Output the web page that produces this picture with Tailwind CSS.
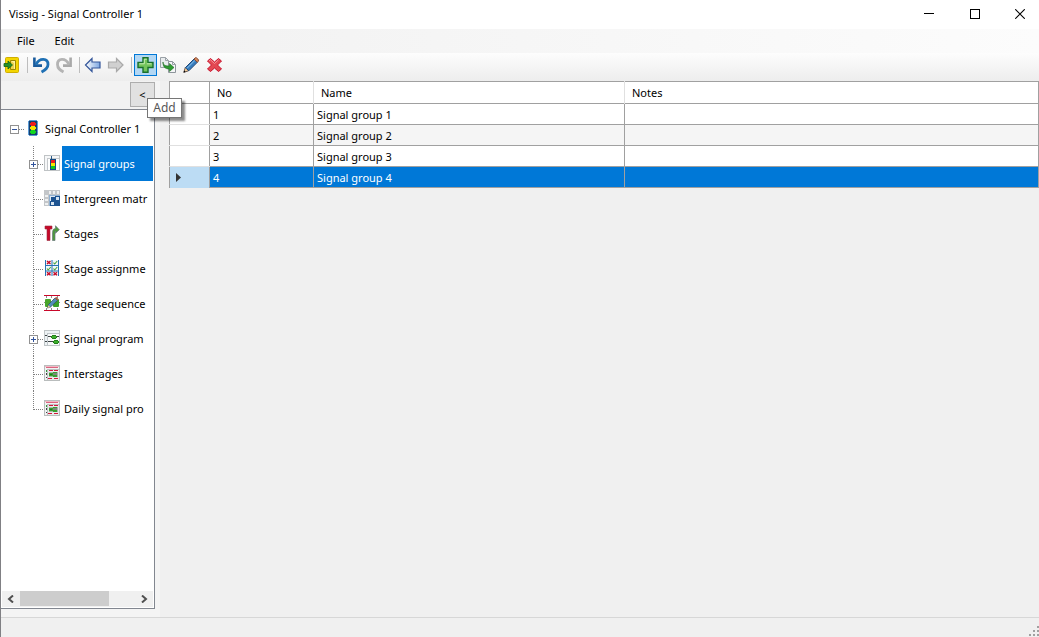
<!DOCTYPE html>
<html lang="en">
<head>
<meta charset="utf-8">
<title>Vissig - Signal Controller 1</title>
<script src="https://cdn.jsdelivr.net/npm/@tailwindcss/browser@4"></script>
</head>
<body class="flex h-screen flex-col overflow-hidden border-l border-[#808084] bg-[#f0f0f0] font-['Noto_Sans','Open_Sans',sans-serif] text-[11px] leading-4 text-black">

<svg class="hidden" aria-hidden="true">
  <symbol id="lamp" viewBox="0 0 10 16">
    <g shape-rendering="crispEdges">
      <path d="M1 0h8v1h1v14H9v1H1v-1H0V1h1z" fill="#5b9bd5"/><path d="M1 1h8v14H1z" fill="#163f6e"/>
      <path d="M3 2h4v1h1v2H7v1H3V5H2V3h1z" fill="#f01c1c"/><path d="M3 6h4v1h1v2H7v1H3V9H2V7h1z" fill="#f5e600"/><path d="M3 10h4v1h1v2H7v1H3v-1H2v-2h1z" fill="#12d620"/>
    </g>
  </symbol>
  <symbol id="report" viewBox="0 0 16 16">
    <g shape-rendering="crispEdges">
      <path d="M0 0h16v16H0z" fill="#b9bdbd"/><path d="M1 1h14v14H1z" fill="#f1f3f3"/>
      <path d="M1 1h14v1H1z" fill="#f1b8c3"/><path d="M2 2h12v1H2z" fill="#dc6480"/>
      <path d="M3 4h12v11H3z" fill="#bdc1c1"/><path d="M4 5h11v10H4z" fill="#e8eaea"/>
      <path d="M2 5h1v2H2z" fill="#2d9c3a"/><path d="M2 8h1v2H2zM2 12h1v1H2z" fill="#444"/>
      <path d="M5 5h4v1H5zM10 5h4v1h-4zM4 13h4v1H4zM10 13h4v1h-4z" fill="#d3183b"/>
      <path d="M5 7h9v5H5z" fill="#a9b5a9"/>
      <path d="M9 7h4v1H9zM5 8h4v3H5zM9 10h4v2H9z" fill="#37a02f"/>
      <path d="M9 8h4v2H9z" fill="#7d867d"/><path d="M6 9h2v1H6z" fill="#217a1d"/>
    </g>
  </symbol>
</svg>

<header class="flex h-[29px] shrink-0 items-center bg-white pb-px pl-2">
  <h1>Vissig - Signal Controller 1</h1>
  <div class="ml-auto flex h-full">
    <button class="flex w-[46px] items-center justify-center" aria-label="Minimize"><svg width="10" height="10" shape-rendering="crispEdges"><path d="M0 4h10v1H0z"/></svg></button>
    <button class="flex w-[45px] items-center justify-center" aria-label="Maximize"><svg width="10" height="10" fill="none" stroke="#000" shape-rendering="crispEdges"><path d="M.5 .5h9v9h-9z"/></svg></button>
    <button class="flex w-[42px] items-center justify-center pl-1" aria-label="Close"><svg width="10" height="10" fill="none" stroke="#000" stroke-width="1.1"><path d="M.2 .2l9.600 9.600M9.800 .2l-9.600 9.600"/></svg></button>
  </div>
</header>

<nav class="flex h-6 shrink-0 items-center bg-linear-to-r from-[#f0f0f0] to-[#fcfcfc] pl-4" aria-label="Menu">
  <button class="mr-5">File</button>
  <button>Edit</button>
</nav>

<div class="flex h-7 shrink-0 items-start bg-linear-to-b from-[#fdfdfd] to-[#ededed] pl-[2px]" role="toolbar" aria-label="Tools">
  <button class="flex h-6 w-5 items-center" aria-label="Exit">
    <svg width="17" height="16" viewBox="0 0 17 16"><rect x="2.500" y=".5" width="13" height="15" rx="1" fill="#f3d500" stroke="#d0ae00"/><path d="M7.500 3.500h5v9h-5z" fill="#fff29b" stroke="#9b8600"/><path d="M8 4l3 2v6H8z" fill="#ead24c"/><path d="M1 6.500h4v-2.500l4.500 4-4.500 4V9.500H1z" fill="#23902b" stroke="#126316" stroke-width=".8"/></svg>
  </button>
  <span class="mx-1 mt-1 h-4 w-px bg-[#bdbdbd]"></span>
  <button class="flex h-6 w-[23px] items-center pl-px" aria-label="Undo">
    <svg width="17" height="18" viewBox="0 0 17 18" fill="none"><path d="M1.400 1.500v8.100H9" stroke="#1a5b9c" stroke-width="2.600"/><path d="M3 8.500C6.500 1.500 15 2 15 8.500c0 4-3 5.500-6.500 7.500" stroke="#1f70b4" stroke-width="2.800"/></svg>
  </button>
  <button class="flex h-6 w-6 items-center pl-px" aria-label="Redo">
    <svg width="17" height="18" viewBox="0 0 17 18" fill="none"><path d="M14.600 1.500v8.100H7" stroke="#a9a9a9" stroke-width="2.600"/><path d="M13 8.500C9.500 1.500 1.500 2 1.500 8.500c0 4 2.500 5.500 6 7.500" stroke="#b4b4b4" stroke-width="2.800"/></svg>
  </button>
  <span class="mr-1 mt-1 h-4 w-px bg-[#bdbdbd]"></span>
  <button class="flex h-6 w-[23px] items-center" aria-label="Back">
    <svg width="17" height="16" viewBox="0 0 17 16"><defs><linearGradient id="bl"><stop stop-color="#fff"/><stop offset="1" stop-color="#7ba5e0"/></linearGradient></defs><path d="M1.500 8l6.500-6.500V5h8v6H8v3.500z" fill="url(#bl)" stroke="#34569a" stroke-width="1.200"/></svg>
  </button>
  <button class="flex h-6 w-6 items-center" aria-label="Forward">
    <svg width="17" height="16" viewBox="0 0 17 16"><path d="M16 8L9.500 1.500V5H1.500v6h8v3.500z" fill="#d0d0d0" stroke="#a9a9a9" stroke-width="1.200"/></svg>
  </button>
  <span class="mr-[2px] mt-1 h-4 w-px bg-[#bdbdbd]"></span>
  <div class="relative">
    <button class="mt-px flex h-[22px] w-[23px] items-center justify-center border border-[#0078d7] bg-[#b3d7f3]" aria-label="Add" aria-describedby="tip">
      <svg width="17" height="16" viewBox="0 0 17 16"><path d="M6 .8h5v4.700h5v5h-5v4.700H6v-4.700H1v-5h5z" fill="#73c45c" stroke="#18702d" stroke-width="1.400"/><path d="M7.300 6.800V2.200h2.500M2.300 6.800h5M9.800 6.800h4.800" stroke="#c7efb5" fill="none"/></svg>
    </button>
    <div id="tip" role="tooltip" class="absolute left-[13px] top-[45px] z-10 flex h-5 w-[35px] items-center justify-center border border-[#767676] bg-white text-[12px] text-[#575757] shadow-[3px_3px_2px_rgba(0,0,0,0.45)]">Add</div>
  </div>
  <button class="flex h-6 w-[23px] items-center justify-center" aria-label="Duplicate">
    <svg width="17" height="16" viewBox="0 0 17 16"><path d="M.5 .5h5l3 3v7h-8z" fill="#e9ecee" stroke="#9aa1a7"/><path d="M8.500 4.500h4l3 3v8h-7z" fill="#f5f6f7" stroke="#8d959b"/><path d="M12.500 4.500v3h3M5.500 .5v3h3" fill="none" stroke="#9aa1a7"/><path d="M3 5c0 3 2 4 6.500 4V6.500L14 10.500l-4.500 4V12C5 12 3 10 3 5z" fill="#2e9b31" stroke="#17661c" stroke-width=".6"/></svg>
  </button>
  <button class="flex h-6 w-[23px] items-center justify-center" aria-label="Edit item">
    <svg width="17" height="16" viewBox="0 0 17 16"><path d="M.8 15.300l1.500-4.800 3.300 3.300z" fill="#f5cf9c" stroke="#44332d" stroke-width=".8"/><path d="M2.500 10.500L11 2l3.300 3.300-8.500 8.500z" fill="#367cbd" stroke="#234876"/><path d="M4 11.300l8-8" stroke="#91c6ec"/><path d="M11 2l1.200-1.200c1.200-.8 4 2 3.200 3.300l-1.100 1.200z" fill="#d8885b" stroke="#854b35"/><path d="M.6 15.500l.6-2 1.400 1.400z"/></svg>
  </button>
  <button class="flex h-6 w-[23px] items-center justify-center" aria-label="Delete">
    <svg width="17" height="16" viewBox="0 0 17 16"><path d="M1.500 4l3-2.500L8.500 5l4-3.500 3 2.500-4 4 4 4-3 2.500-4-3.500-4 3.500-3-2.500 4-4z" fill="#e34852" stroke="#c8102a"/><path d="M3 4l1.500-1.200 4 3.700 4-3.700" fill="none" stroke="#f5949a"/></svg>
  </button>
</div>

<div class="flex min-h-0 flex-1">
  <aside class="flex w-[159px] shrink-0 flex-col bg-[#f4f4f4] pb-2 pr-[5px]">
    <div class="flex h-7 shrink-0 items-start justify-end bg-[#f2f2f2] pt-px">
      <button class="h-[25px] w-[25px] border border-[#adadad] bg-[#e1e1e1]" aria-label="Collapse panel">&lt;</button>
    </div>
    <div class="flex min-h-0 flex-1 flex-col border border-l-0 border-[#828790] bg-white p-px">
      <ul class="min-h-0 flex-1 overflow-hidden whitespace-nowrap" role="tree" aria-label="Signal controller">
        <li role="treeitem" aria-expanded="true">
          <button class="flex h-[35px] items-center pl-2">
            <svg class="mr-[3px]" width="15" height="35" fill="none" shape-rendering="crispEdges"><path d="M.5 14.500h8v8h-8z" fill="#fff" stroke="#919191"/><path d="M2 18.500h5" stroke="#32549c"/><path d="M9 18.500h6" stroke="#808080" stroke-dasharray="1 1"/></svg>
            <svg class="mr-[7px]" width="10" height="17"><use href="#lamp" width="10" height="16"/></svg>
            <span>Signal Controller 1</span>
          </button>
          <ul role="group">
            <li role="treeitem" aria-selected="true"><button class="flex h-[35px] w-full items-center pl-[27px]">
              <svg class="shrink-0" width="15" height="35" fill="none" shape-rendering="crispEdges"><path d="M4.500 0v35M5 18.500h10" stroke="#808080" stroke-dasharray="1 1"/><path d="M.5 14.500h8v8h-8z" fill="#fff" stroke="#919191"/><path d="M2 18.500h5M4.500 16v5" stroke="#32549c"/></svg>
              <svg class="mr-[2px] shrink-0" width="16" height="17" shape-rendering="crispEdges"><path d="M0 0h16v16H0z" fill="#bfc3c5"/><path d="M1 1h14v14H1z" fill="#f6f7f8"/><path d="M3 3h12v12H3z" fill="#c5c9cc"/><path d="M4 4h11v11H4z" fill="#fff"/><path d="M7 1h1v3H7z" fill="#295a87"/><path d="M6 4h6v11H6z" fill="#174b82"/><path d="M7 5h4v3H7z" fill="#f01c1c"/><path d="M7 8h4v3H7z" fill="#f5e600"/><path d="M7 11h4v3H7z" fill="#12c620"/></svg>
              <span class="flex h-full flex-1 items-center bg-[#0078d7] pl-[2px] text-white">Signal groups</span>
            </button></li>
            <li role="treeitem"><button class="flex h-[35px] w-full items-center pl-[27px]">
              <svg class="shrink-0" width="15" height="35" shape-rendering="crispEdges"><path d="M4.500 0v35M5 18.500h10" stroke="#808080" stroke-dasharray="1 1"/></svg>
              <svg class="mr-1 shrink-0" width="16" height="17" shape-rendering="crispEdges"><path d="M0 0h16v5H5v11H0z" fill="#c3c6c9"/><path d="M5 1h2v3H5zM9 1h2v3H9zM13 1h2v3h-2zM1 5h3v2H1zM1 9h3v2H1zM1 13h3v2H1z" fill="#eef0f1"/><path d="M5 5h11v11H5z" fill="#dfe9f3"/><path d="M5 5h11v1H5zM5 6h1v10H5z" fill="#8fb0d2"/><path d="M11 6h5v5h-5zM6 11h5v5H6z" fill="#1d5391"/><path d="M7 12h3v3H7zM12 7h3v3h-3z" fill="#d3e2f0"/><path d="M7 7h4v4H7zM11 11h5v5h-5z" fill="#1d5391"/></svg>
              <span>Intergreen matr</span>
            </button></li>
            <li role="treeitem"><button class="flex h-[35px] w-full items-center pl-[27px]">
              <svg class="shrink-0" width="15" height="35" shape-rendering="crispEdges"><path d="M4.500 0v35M5 18.500h10" stroke="#808080" stroke-dasharray="1 1"/></svg>
              <svg class="mr-1 shrink-0" width="16" height="17"><path d="M1 1h7v3H6v11.500H3V4H1z" fill="#c70828" stroke="#9c3144" stroke-width=".6"/><path d="M8.500 15.500V7.500q0-4 3-4V.7l3.800 4-3.800 3.600V6q-.5 0-.5 2v7.500z" fill="#4c9a3b" stroke="#68757b" stroke-width=".7"/></svg>
              <span>Stages</span>
            </button></li>
            <li role="treeitem"><button class="flex h-[35px] w-full items-center pl-[27px]">
              <svg class="shrink-0" width="15" height="35" shape-rendering="crispEdges"><path d="M4.500 0v35M5 18.500h10" stroke="#808080" stroke-dasharray="1 1"/></svg>
              <svg class="mr-1 shrink-0" width="16" height="17" fill="none"><path d="M1 0h14v16H1z" fill="#f1f7fb"/><path d="M1.500 0v16M8 0v16M14.500 0v16M1 5.500h14M1 11h14" stroke="#2673b5"/><path d="M3 1l3.500 3M6.500 1L3 4M3 12.300l3.500 3M6.500 12.300l-3.500 3M9.500 12.300l3.500 3M13 12.300l-3.500 3" stroke="#c80928" stroke-width="1.500"/><path d="M9.500 2.700l1.200 1.300 2.500-3M3 8.500l1.200 1.500L6.800 7M9.500 8.500l1.200 1.500 2.500-3" stroke="#48a23c" stroke-width="1.100"/></svg>
              <span>Stage assignme</span>
            </button></li>
            <li role="treeitem"><button class="flex h-[35px] w-full items-center pl-[27px]">
              <svg class="shrink-0" width="15" height="35" shape-rendering="crispEdges"><path d="M4.500 0v35M5 18.500h10" stroke="#808080" stroke-dasharray="1 1"/></svg>
              <svg class="mr-1 shrink-0" width="16" height="17"><path d="M0 0h16v1H0zM0 15h16v1H0z" fill="#c9082a"/><path d="M2 1h1v2H2zM7 1h1v2H7zM13 1h1v2h-1zM2 13h1v2H2zM7 13h1v2H7zM13 13h1v2h-1zM0 7h16v1H0z" fill="#8c8c8c"/><rect x="1" y="4" width="6" height="8" rx="1" fill="#48a52a"/><rect x="9" y="4" width="6" height="8" rx="1" fill="#37a02a"/><path d="M3.500 13l1-3.500 6.500-6.500 2.500 2.500-7 6.500z" fill="#4f8eba" stroke="#304860" stroke-width=".7"/><path d="M11 3l1.200-1.200 2.500 2.500-1.200 1.200z" fill="#ad6340"/><path d="M3.500 13l.8-2.700 2 2z" fill="#f2c896"/></svg>
              <span>Stage sequence</span>
            </button></li>
            <li role="treeitem" aria-expanded="false"><button class="flex h-[35px] w-full items-center pl-[27px]">
              <svg class="shrink-0" width="15" height="35" fill="none" shape-rendering="crispEdges"><path d="M4.500 0v35M5 18.500h10" stroke="#808080" stroke-dasharray="1 1"/><path d="M.5 14.500h8v8h-8z" fill="#fff" stroke="#919191"/><path d="M2 18.500h5M4.500 16v5" stroke="#32549c"/></svg>
              <svg class="mr-1 shrink-0" width="16" height="17" shape-rendering="crispEdges"><path d="M0 0h16v16H0z" fill="#bfc5c7"/><path d="M1 1h14v14H1z" fill="#edf2f4"/><path d="M3 3h12v12H3z" fill="#bec5c9"/><path d="M4 4h11v11H4z" fill="#f8fafa"/><path d="M1 5h2v1H1zM1 11h2v1H1zM4 6h11v1H4zM4 11h11v1H4z" fill="#3d4345"/><path d="M8 5h4v1h1v2h-1v1H8V8H7V6h1zM10 10h4v1h1v2h-1v1h-4v-1H9v-2h1z" fill="#238019"/><path d="M8 6h4v2H8zM10 11h4v2h-4z" fill="#3cae2c"/></svg>
              <span>Signal program</span>
            </button></li>
            <li role="treeitem"><button class="flex h-[35px] w-full items-center pl-[27px]">
              <svg class="shrink-0" width="15" height="35" shape-rendering="crispEdges"><path d="M4.500 0v35M5 18.500h10" stroke="#808080" stroke-dasharray="1 1"/></svg>
              <svg class="mr-1 shrink-0" width="16" height="17"><use href="#report" width="16" height="16"/></svg>
              <span>Interstages</span>
            </button></li>
            <li role="treeitem"><button class="flex h-[35px] w-full items-center pl-[27px]">
              <svg class="shrink-0" width="15" height="35" shape-rendering="crispEdges"><path d="M4.500 0v19M5 18.500h10" stroke="#808080" stroke-dasharray="1 1"/></svg>
              <svg class="mr-1 shrink-0" width="16" height="17"><use href="#report" width="16" height="16"/></svg>
              <span>Daily signal pro</span>
            </button></li>
          </ul>
        </li>
      </ul>
      <div class="flex h-4 shrink-0 bg-[#f0f0f0]">
        <button class="flex w-[18px] items-center justify-center" aria-label="Scroll left"><svg width="8" height="8" fill="none" stroke="#505050" stroke-width="2"><path d="M6 .5L2 4l4 3.500"/></svg></button>
        <div class="flex-1"><div class="h-[15px] w-[89px] bg-[#cdcdcd]"></div></div>
        <button class="flex w-[18px] items-center justify-center" aria-label="Scroll right"><svg width="8" height="8" fill="none" stroke="#505050" stroke-width="2"><path d="M2 .5L6 4 2 7.500"/></svg></button>
      </div>
    </div>
  </aside>

  <main class="min-w-0 flex-1 pl-[9px]">
    <table class="w-full table-fixed border-collapse bg-white text-left">
      <colgroup><col class="w-10"><col class="w-[104px]"><col class="w-[311px]"><col></colgroup>
      <thead>
        <tr class="h-[22px] border border-[#a0a0a0]">
          <th class="border-r border-[#a0a0a0] p-0"></th>
          <th class="border-r border-r-[#e0e0e0] p-0 pl-[7px] font-normal">No</th>
          <th class="border-r border-r-[#e0e0e0] p-0 pl-[7px] font-normal">Name</th>
          <th class="p-0 pl-[7px] font-normal">Notes</th>
        </tr>
      </thead>
      <tbody>
        <tr class="h-[21px]"><td class="border-x border-b border-[#a0a0a0] border-b-[#e0e0e0] p-0"></td><td class="border border-[#a0a0a0] p-0 pl-[3px] pt-px">1</td><td class="border border-[#a0a0a0] p-0 pl-[3px] pt-px">Signal group 1</td><td class="border border-[#a0a0a0] p-0"></td></tr>
        <tr class="h-[21px]"><td class="border-x border-b border-[#a0a0a0] border-b-[#e0e0e0] p-0"></td><td class="border border-[#a0a0a0] bg-[#f5f5f5] p-0 pl-[3px] pt-px">2</td><td class="border border-[#a0a0a0] bg-[#f5f5f5] p-0 pl-[3px] pt-px">Signal group 2</td><td class="border border-[#a0a0a0] bg-[#f5f5f5] p-0"></td></tr>
        <tr class="h-[21px]"><td class="border-x border-b border-[#a0a0a0] border-b-[#e0e0e0] p-0"></td><td class="border border-[#a0a0a0] p-0 pl-[3px] pt-px">3</td><td class="border border-[#a0a0a0] p-0 pl-[3px] pt-px">Signal group 3</td><td class="border border-[#a0a0a0] p-0"></td></tr>
        <tr class="h-[21px] text-white"><td class="border-x border-[#a0a0a0] bg-[#bcdcf4] p-0 pl-[6px] pt-px"><svg width="6" height="9"><path d="M0 0l5 4.500L0 9z" fill="#333"/></svg></td><td class="border border-[#a0a0a0] bg-[#0078d7] p-0 pl-[3px] pt-px">4</td><td class="border border-[#a0a0a0] bg-[#0078d7] p-0 pl-[3px] pt-px">Signal group 4</td><td class="border border-[#a0a0a0] bg-[#0078d7] p-0"></td></tr>
      </tbody>
    </table>
  </main>
</div>

<footer class="flex h-5 shrink-0 items-end justify-end border-t border-[#d7d7d7] bg-[#f0f0f0]">
  <svg width="11" height="11" fill="#a0a0a0" shape-rendering="crispEdges" aria-hidden="true"><path d="M9 0h2v2H9zM5 4h2v2H5zM9 4h2v2H9zM1 8h2v2H1zM5 8h2v2H5zM9 8h2v2H9z"/></svg>
</footer>
</body>
</html>
